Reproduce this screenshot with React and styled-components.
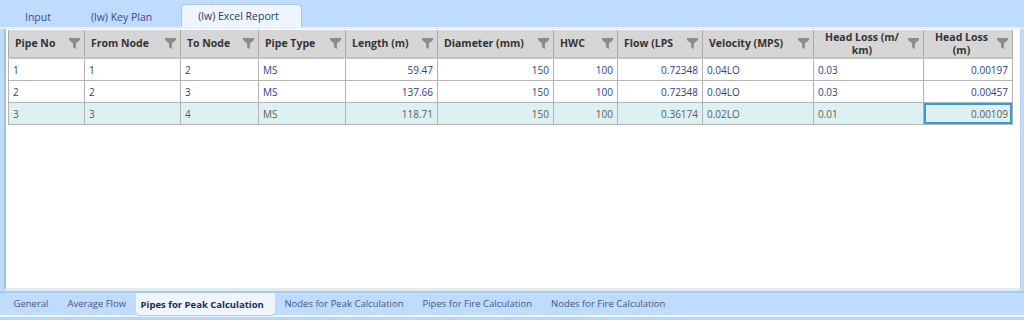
import React from 'react';
import styled, { createGlobalStyle } from 'styled-components';

const GlobalStyle = createGlobalStyle`
  html, body {
    margin: 0;
    padding: 0;
    background: #bfdbfd;
    font-family: "Open Sans", "Noto Sans", sans-serif;
  }
`;

const Window = styled.div`
  width: 1024px;
  height: 320px;
  display: flex;
  flex-direction: column;
  background: #bfdbfd;
  overflow: hidden;
`;

const TopTabs = styled.div`
  height: 23px;
  padding: 4px 0 0 8px;
  display: flex;
  align-items: flex-end;
  border-bottom: 2px solid #e6f0fc;
`;

const TopTab = styled.div`
  height: ${(p) => (p.$active ? '22px' : '20px')};
  padding: 0 ${(p) => p.$padR || p.$pad}px 0 ${(p) => p.$pad}px;
  display: flex;
  align-items: center;
  font-size: 10.5px;
  color: ${(p) => (p.$active ? '#2b3566' : '#3b4a94')};
  background: ${(p) => (p.$active ? '#eef5fe' : 'transparent')};
  border: 1px solid ${(p) => (p.$active ? '#a9c7ee' : 'transparent')};
  border-bottom: none;
  border-radius: 5px 5px 0 0;
  margin-right: ${(p) => p.$gap || 0}px;
`;

const Panel = styled.div`
  flex: 1;
  margin: 0 3px 0 4px;
  background: #ffffff;
  border-left: 2px solid #9fc1ea;
  border-right: 1px solid #b7d1f2;
  padding: 1px 0 0 2px;
  display: flex;
  flex-direction: column;
  border-bottom: 3px solid #e2eced;
`;

const Table = styled.table`
  border-collapse: collapse;
  table-layout: fixed;
  width: 1004px;
  font-size: 10px;
`;

const Th = styled.th`
  height: 27px;
  padding: 0 4px 0 6px;
  background: #d6d6d6;
  border-left: 1px solid #a9a9a9;
  border-right: 1px solid #a9a9a9;
  border-bottom: 2px solid #c3c3c3;
  color: #333333;
  font-weight: 700;
  font-size: 10.5px;
  text-align: left;
`;

const HeadInner = styled.div`
  display: flex;
  align-items: center;
  justify-content: space-between;
  gap: 4px;
`;

const HeadLabel = styled.span`
  line-height: 13px;
  text-align: ${(p) => (p.$center ? 'center' : 'left')};
  flex: ${(p) => (p.$center ? 1 : 'none')};
`;

const Td = styled.td`
  height: 21px;
  padding: 0 4px;
  border: 1px solid #b4b4b4;
  border-top: none;
  color: ${(p) => (p.$muted ? '#5a5a5a' : '#2e3d93')};
  background: ${(p) => (p.$muted ? '#def1f2' : '#ffffff')};
  text-align: ${(p) => (p.$right ? 'right' : 'left')};
  white-space: nowrap;
  overflow: hidden;
  box-shadow: ${(p) => (p.$selected ? 'inset 0 0 0 2px #3b9ad8' : 'none')};
`;

const BottomTabs = styled.div`
  height: 22px;
  display: flex;
  align-items: flex-start;
  padding-left: 4px;
  border-top: 2px solid #abc9ef;
  border-bottom: 2px solid #eef5fe;
  margin-bottom: 3px;
  box-shadow: 0 3px 0 #b9d5f6;
`;

const BottomTab = styled.div`
  height: ${(p) => (p.$active ? '22px' : '21px')};
  padding: ${(p) => (p.$active ? '0 11px 0 5px' : '0 9.5px')};
  display: flex;
  align-items: center;
  font-size: 9.5px;
  font-weight: ${(p) => (p.$active ? 700 : 400)};
  color: ${(p) => (p.$active ? '#1f2a57' : '#44578e')};
  background: ${(p) => (p.$active ? '#eef5fe' : 'transparent')};
  border-radius: 0 0 4px 4px;
  box-shadow: ${(p) => (p.$active ? '0 1px 1px #a9c3e4' : 'none')};
`;

const Funnel = () => (
  <svg width="11" height="11" viewBox="0 0 11 11" style={{ flex: 'none' }}>
    <path d="M0 0 H11 V2 L6.9 5.4 V11 L4.1 9.4 V5.4 L0 2 Z" fill="#8c8c8c" />
  </svg>
);

const columns = [
  { label: 'Pipe No', width: 76 },
  { label: 'From Node', width: 96 },
  { label: 'To Node', width: 78 },
  { label: 'Pipe Type', width: 87 },
  { label: 'Length (m)', width: 92, right: true },
  { label: 'Diameter (mm)', width: 116, right: true },
  { label: 'HWC', width: 64, right: true },
  { label: 'Flow (LPS', width: 85, right: true },
  { label: 'Velocity (MPS)', width: 111 },
  { label: 'Head Loss (m/ km)', width: 110, center: true },
  { label: 'Head Loss (m)', width: 89, right: true, center: true },
];

const rows = [
  ['1', '1', '2', 'MS', '59.47', '150', '100', '0.72348', '0.04LO', '0.03', '0.00197'],
  ['2', '2', '3', 'MS', '137.66', '150', '100', '0.72348', '0.04LO', '0.03', '0.00457'],
  ['3', '3', '4', 'MS', '118.71', '150', '100', '0.36174', '0.02LO', '0.01', '0.00109'],
];

const bottomTabs = [
  { label: 'General' },
  { label: 'Average Flow' },
  { label: 'Pipes for Peak Calculation', active: true },
  { label: 'Nodes for Peak Calculation' },
  { label: 'Pipes for Fire Calculation' },
  { label: 'Nodes for Fire Calculation' },
];

const App = () => (
  <Window>
    <GlobalStyle />
    <TopTabs>
      <TopTab $pad={16}>Input</TopTab>
      <TopTab $pad={22} $gap={6}>(lw) Key Plan</TopTab>
      <TopTab $pad={16} $padR={22} $active>(lw) Excel Report</TopTab>
    </TopTabs>
    <Panel>
      <Table>
        <colgroup>
          {columns.map((c) => (
            <col key={c.label} style={{ width: c.width }} />
          ))}
        </colgroup>
        <thead>
          <tr>
            {columns.map((c) => (
              <Th key={c.label}>
                <HeadInner>
                  <HeadLabel $center={c.center}>{c.label}</HeadLabel>
                  <Funnel />
                </HeadInner>
              </Th>
            ))}
          </tr>
        </thead>
        <tbody>
          {rows.map((r, i) => (
            <tr key={i}>
              {r.map((v, j) => (
                <Td
                  key={j}
                  $right={columns[j].right}
                  $muted={i === 2}
                  $selected={i === 2 && j === 10}
                >
                  {v}
                </Td>
              ))}
            </tr>
          ))}
        </tbody>
      </Table>
    </Panel>
    <BottomTabs>
      {bottomTabs.map((t) => (
        <BottomTab key={t.label} $active={t.active}>
          {t.label}
        </BottomTab>
      ))}
    </BottomTabs>
  </Window>
);

export default App;
